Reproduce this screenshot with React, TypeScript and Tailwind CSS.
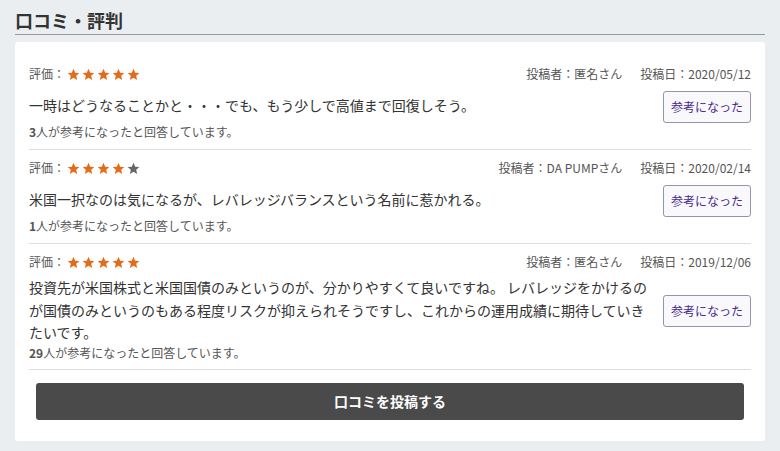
import React from 'react';

interface Review {
  rating: number;
  author: string;
  date: string;
  comment: string;
  helpful: number;
}

const reviews: Review[] = [
  {
    rating: 5,
    author: '匿名さん',
    date: '2020/05/12',
    comment: '一時はどうなることかと・・・でも、もう少しで高値まで回復しそう。',
    helpful: 3,
  },
  {
    rating: 4,
    author: 'DA PUMPさん',
    date: '2020/02/14',
    comment: '米国一択なのは気になるが、レバレッジバランスという名前に惹かれる。',
    helpful: 1,
  },
  {
    rating: 5,
    author: '匿名さん',
    date: '2019/12/06',
    comment:
      '投資先が米国株式と米国国債のみというのが、分かりやすくて良いですね。 レバレッジをかけるのが国債のみというのもある程度リスクが抑えられそうですし、これからの運用成績に期待していきたいです。',
    helpful: 29,
  },
];

// Single star drawing
function Star({ filled }: { filled: boolean }) {
  return (
    <svg viewBox="0 0 24 24" className={filled ? 'w-[13px] h-[13px] fill-[#e36c1a]' : 'w-[13px] h-[13px] fill-[#666666]'}>
      <path d="M12 1.5l3.1 7.1 7.7.7-5.8 5.1 1.7 7.6L12 18l-6.7 4 1.7-7.6L1.2 9.3l7.7-.7z" />
    </svg>
  );
}

function ReviewItem({ review, first, last }: { review: Review; first: boolean; last: boolean }) {
  return (
    <div
      className={`border-b border-[#dddddd] ${first ? 'pt-0' : 'pt-[9px]'} ${last ? 'pb-[7px]' : 'pb-2'}`}
    >
      <div className="flex items-center justify-between text-xs leading-[18px] text-[#555555]">
        <div className="flex items-center">
          <span>評価：</span>
          <span className="ml-[2px] flex items-center gap-[2px]">
            {[1, 2, 3, 4, 5].map((i) => (
              <Star key={i} filled={i <= review.rating} />
            ))}
          </span>
        </div>
        <div className="flex items-center gap-[18px]">
          <span>投稿者：{review.author}</span>
          <span>投稿日：{review.date}</span>
        </div>
      </div>

      <div className="mt-[5px] flex items-center gap-2">
        <p className="flex-1 text-sm leading-[22.5px] text-[#333333]">{review.comment}</p>
        <button className="mt-[3px] h-8 w-[88px] shrink-0 rounded-[3px] border border-[#9096ad] bg-[#f9f9fb] text-xs text-[#4a2a8c]">
          参考になった
        </button>
      </div>

      <p className="text-xs leading-[18px] text-[#555555]">
        <span className="font-bold">{review.helpful}</span>人が参考になったと回答しています。
      </p>
    </div>
  );
}

export default function App() {
  return (
    <div
      className="min-h-[451px] bg-[#ebeef1] px-[15px] pt-[7px] pb-[10px]"
      style={{ fontFamily: '"Noto Sans CJK JP", "Noto Sans", sans-serif' }}
    >
      <h2 className="border-b border-[#999999] pb-[1px] text-lg font-bold leading-[26px] text-[#333333]">
        口コミ・評判
      </h2>

      <div className="mt-[7px] rounded-[3px] bg-white px-[14px] pt-[23px] pb-[21px]">
        {reviews.map((r, i) => (
          <ReviewItem key={i} review={r} first={i === 0} last={i === reviews.length - 1} />
        ))}

        <div className="px-[7px] pt-[13px]">
          <button className="h-[37px] w-full rounded-[3px] bg-[#4a4a4a] text-sm font-bold text-white">
            口コミを投稿する
          </button>
        </div>
      </div>
    </div>
  );
}
